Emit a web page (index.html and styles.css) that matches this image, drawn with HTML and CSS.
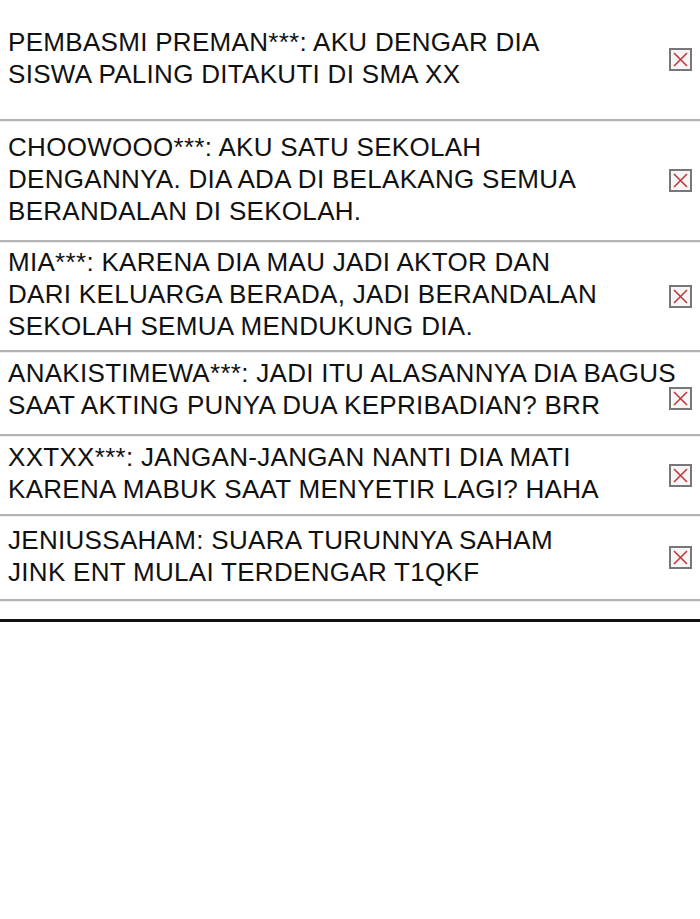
FILE: index.html
```html
<!DOCTYPE html>
<html lang="id">
<head>
<meta charset="utf-8">
<title>Komentar</title>
<link rel="stylesheet" href="styles.css">
</head>
<body>
<main class="list">
  <div class="row row--a">
    <p class="text">PEMBASMI PREMAN***: AKU DENGAR DIA<br>SISWA PALING DITAKUTI DI SMA XX</p>
    <span class="del"><svg viewBox="0 0 23 23" width="23" height="23"><rect x="1" y="1" width="21" height="21" fill="#f6f6f6" stroke="#777" stroke-width="2"/><path d="M5 5 L18 18 M18 5 L5 18" stroke="#c23238" stroke-width="1.5" fill="none"/></svg></span>
  </div>
  <div class="row row--b">
    <p class="text">CHOOWOOO***: AKU SATU SEKOLAH<br>DENGANNYA. DIA ADA DI BELAKANG SEMUA<br>BERANDALAN DI SEKOLAH.</p>
    <span class="del"><svg viewBox="0 0 23 23" width="23" height="23"><rect x="1" y="1" width="21" height="21" fill="#f6f6f6" stroke="#777" stroke-width="2"/><path d="M5 5 L18 18 M18 5 L5 18" stroke="#c23238" stroke-width="1.5" fill="none"/></svg></span>
  </div>
  <div class="row row--c">
    <p class="text">MIA***: KARENA DIA MAU JADI AKTOR DAN<br>DARI KELUARGA BERADA, JADI BERANDALAN<br>SEKOLAH SEMUA MENDUKUNG DIA.</p>
    <span class="del"><svg viewBox="0 0 23 23" width="23" height="23"><rect x="1" y="1" width="21" height="21" fill="#f6f6f6" stroke="#777" stroke-width="2"/><path d="M5 5 L18 18 M18 5 L5 18" stroke="#c23238" stroke-width="1.5" fill="none"/></svg></span>
  </div>
  <div class="row row--d">
    <p class="text text--up">ANAKISTIMEWA***: JADI ITU ALASANNYA DIA BAGUS<br>SAAT AKTING PUNYA DUA KEPRIBADIAN? BRR</p>
    <span class="del del--down"><svg viewBox="0 0 23 23" width="23" height="23"><rect x="1" y="1" width="21" height="21" fill="#f6f6f6" stroke="#777" stroke-width="2"/><path d="M5 5 L18 18 M18 5 L5 18" stroke="#c23238" stroke-width="1.5" fill="none"/></svg></span>
  </div>
  <div class="row row--e">
    <p class="text">XXTXX***: JANGAN-JANGAN NANTI DIA MATI<br>KARENA MABUK SAAT MENYETIR LAGI? HAHA</p>
    <span class="del"><svg viewBox="0 0 23 23" width="23" height="23"><rect x="1" y="1" width="21" height="21" fill="#f6f6f6" stroke="#777" stroke-width="2"/><path d="M5 5 L18 18 M18 5 L5 18" stroke="#c23238" stroke-width="1.5" fill="none"/></svg></span>
  </div>
  <div class="row row--f">
    <p class="text">JENIUSSAHAM: SUARA TURUNNYA SAHAM<br>JINK ENT MULAI TERDENGAR T1QKF</p>
    <span class="del"><svg viewBox="0 0 23 23" width="23" height="23"><rect x="1" y="1" width="21" height="21" fill="#f6f6f6" stroke="#777" stroke-width="2"/><path d="M5 5 L18 18 M18 5 L5 18" stroke="#c23238" stroke-width="1.5" fill="none"/></svg></span>
  </div>
</main>
<hr class="rule">
</body>
</html>
```
FILE: styles.css
```css
html, body {
  margin: 0;
  padding: 0;
  background: #fff;
}
body {
  width: 700px;
  height: 919px;
  overflow: hidden;
  font-family: "Liberation Sans", Arial, sans-serif;
  color: #111;
}
.list {
  display: flex;
  flex-direction: column;
}
.row {
  display: flex;
  align-items: center;
  box-sizing: border-box;
  padding: 0 8px 4px 8px;
  border-bottom: 2px solid #b3b3b3;
  box-shadow: 0 1px 0 #ececec;
}
.row--a { height: 121px; }
.row--b { height: 121px; }
.row--c { height: 110px; }
.row--d { height: 84px; }
.row--e { height: 80px; }
.row--f { height: 85px; }
.text {
  flex: 1;
  min-width: 0;
  margin: 0;
  font-size: 26px;
  line-height: 32px;
  letter-spacing: 0.3px;
  white-space: nowrap;
}
.text--up { margin-top: -4px; }
.del {
  flex: none;
  display: flex;
  width: 23px;
  height: 23px;
  margin-top: 4px;
}
.del--down { margin-top: 14px; }
.rule {
  margin: 18px 0 0 0;
  border: 0;
  height: 3px;
  background: #111;
}
```
